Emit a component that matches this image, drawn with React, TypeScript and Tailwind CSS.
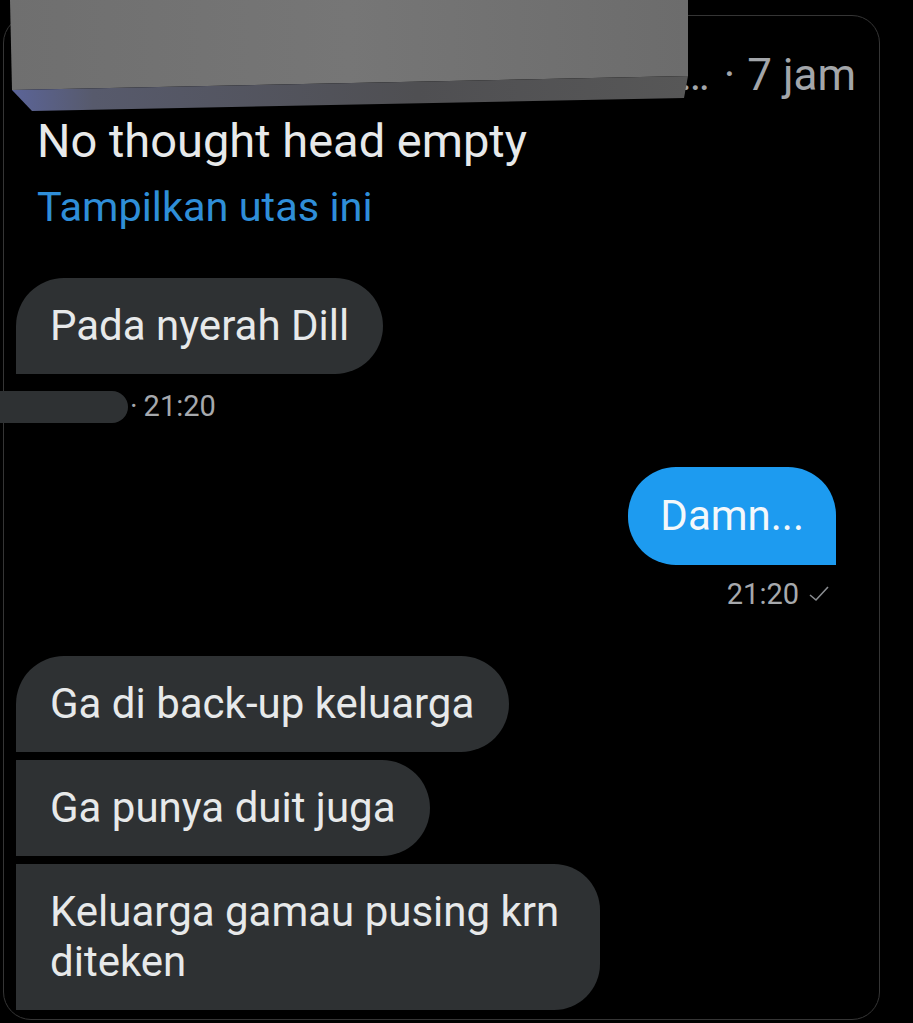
import React from "react";

const CensorBlock = () => (
  <svg width="690" height="114" viewBox="0 0 690 114" className="absolute left-[6px] top-0">
    <defs>
      <linearGradient id="face" x1="0" y1="0" x2="1" y2="0">
        <stop offset="0" stopColor="#6f6f6f" />
        <stop offset="0.5" stopColor="#767676" />
        <stop offset="1" stopColor="#6c6c6c" />
      </linearGradient>
      <linearGradient id="bevel" x1="0" y1="0" x2="1" y2="0">
        <stop offset="0" stopColor="#5b6498" />
        <stop offset="0.12" stopColor="#575a6c" />
        <stop offset="0.6" stopColor="#4f4f52" />
        <stop offset="1" stopColor="#575757" />
      </linearGradient>
    </defs>
    <polygon points="4,0 682,0 682,76 6,90" fill="url(#face)" />
    <polygon points="6,90 682,76 678,98 26,111" fill="url(#bevel)" />
  </svg>
);

const Check = () => (
  <svg width="22" height="18" viewBox="0 0 22 18" className="ml-[9px]">
    <polyline points="2,10 8,15 20,2" fill="none" stroke="#8a8d91" strokeWidth="1.6" />
  </svg>
);

export default function App() {
  return (
    <div
      className="relative w-[913px] h-[1023px] bg-black overflow-hidden text-[#e7e9ea]"
      style={{ fontFamily: "Roboto, 'Liberation Sans', sans-serif" }}
    >
      <div className="ml-[3px] mt-[15px] w-[877px] h-[1005px] rounded-[28px] border border-[#353535] px-[12px]">
        {/* tweet header */}
        <div className="flex justify-end items-baseline pr-[11px] pt-[33px] text-[44px] leading-[53px] text-[#a3a6aa]">
          <span>…</span>
          <span className="ml-[14px]">·</span>
          <span className="ml-[12px]">7 jam</span>
        </div>

        {/* tweet text */}
        <div className="pl-[21px] mt-[12px]">
          <p className="text-[47px] leading-[54px] text-[#e7e9ea]">No thought head empty</p>
          <p className="mt-[15px] text-[41.5px] leading-[48px] text-[#2f8ed8]">Tampilkan utas ini</p>
        </div>

        {/* messages */}
        <div className="mt-[47px] flex flex-col items-start">
          <div className="rounded-[48px] rounded-bl-none bg-[#2e3133] pl-[34px] pr-[34px] py-[23px] text-[42px] leading-[50px]">
            Pada nyerah Dill
          </div>
          <div className="-ml-[16px] mt-[11px] flex items-center text-[29px] text-[#a6a9ad]">
            <div className="w-[128px] h-[32px] rounded-r-full bg-[#2e3133]" />
            <span className="ml-[2px]">·</span>
            <span className="ml-[6px]">21:20</span>
          </div>
        </div>

        <div className="mt-[38px] flex flex-col items-end pr-[31px]">
          <div className="rounded-[48px] rounded-br-none bg-[#1d9bf0] pl-[32px] pr-[32px] py-[24px] text-[42px] leading-[50px] text-[#f4f8fb]">
            Damn...
          </div>
          <div className="mt-[12px] mr-[6px] flex items-center text-[29px] leading-[34px] text-[#a6a9ad]">
            <span>21:20</span>
            <Check />
          </div>
        </div>

        <div className="mt-[45px] flex flex-col items-start gap-[8px]">
          <div className="rounded-[48px] rounded-bl-none bg-[#2e3133] pl-[34px] pr-[35px] py-[23px] text-[42px] leading-[50px]">
            Ga di back-up keluarga
          </div>
          <div className="rounded-r-[48px] bg-[#2e3133] pl-[34px] pr-[35px] py-[23px] text-[42px] leading-[50px]">
            Ga punya duit juga
          </div>
          <div className="rounded-r-[46px] bg-[#2e3133] pl-[34px] pr-[41px] py-[23px] text-[42px] leading-[50px]">
            Keluarga gamau pusing krn
            <br />
            diteken
          </div>
        </div>
      </div>

      <CensorBlock />
    </div>
  );
}
